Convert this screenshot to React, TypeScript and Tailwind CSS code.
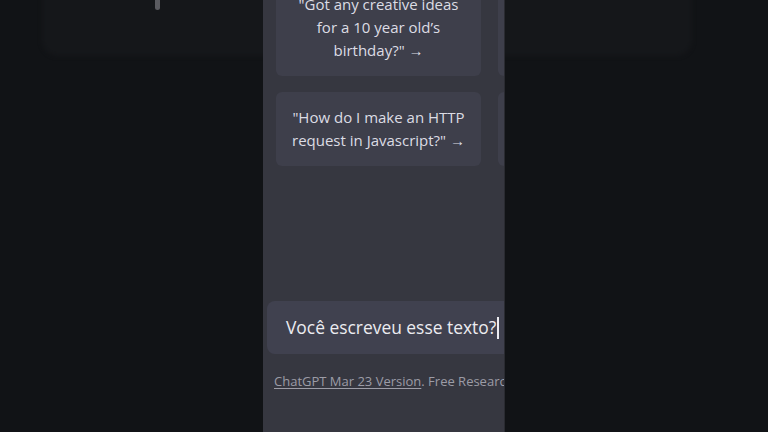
import React from 'react';

const font = { fontFamily: '"Open Sans", "Noto Sans", sans-serif' };

// Suggestion card in the ChatGPT empty state
function ExampleCard({ text, arrow = true }: { text: string; arrow?: boolean }) {
  return (
    <button
      type="button"
      className="w-[205px] shrink-0 rounded-md bg-[#3e3f4b] px-3 py-[14px] text-center text-[15px] font-medium leading-[23px] text-[#dcdce4]"
    >
      {text}
      {arrow && ' →'}
    </button>
  );
}

export default function App() {
  return (
    <div className="relative flex h-[432px] w-[768px] justify-center overflow-hidden bg-[#111316]" style={font}>
      {/* blurred background behind the phone strip */}
      <div className="absolute left-[42px] top-[-30px] h-[86px] w-[650px] rounded-2xl bg-[#15171a] blur-[2px]" />
      <div className="absolute left-[155px] top-0 h-[10px] w-[5px] rounded-b bg-[#5a5b60] blur-[0.5px]" />

      <div className="relative flex w-[242px] flex-col overflow-hidden bg-[#363740]">
        {/* example cards, scrolled so the first ones are cut */}
        <div className="ml-[13px] mt-[-21px] flex gap-[17px]">
          <div className="flex flex-col gap-4">
            <ExampleCard text={'"Got any creative ideas for a 10 year old\u2019s birthday?"'} />
            <ExampleCard text={'"How do I make an HTTP request in Javascript?"'} />
          </div>
          <div className="flex flex-col gap-4">
            <ExampleCard text="Remembers what user said earlier in the conversation" arrow={false} />
            <ExampleCard text="Allows user to provide follow-up corrections" arrow={false} />
          </div>
        </div>

        {/* input */}
        <div className="ml-[4px] mt-auto flex h-[53px] w-[260px] shrink-0 items-center rounded-l-lg bg-[#40414f] pl-[19px]">
          <span className="whitespace-nowrap text-[17.4px] font-medium text-[#ececf1]">Você escreveu esse texto?</span>
          <span className="ml-[1px] inline-block h-[22px] w-[1.5px] bg-[#ececf1]" />
        </div>

        <div className="mb-[42px] ml-[11px] mt-[18px] whitespace-nowrap text-[13px] leading-[18px] text-[#9c9ca6]">
          <span className="underline underline-offset-2">ChatGPT Mar 23 Version</span>. Free Research Preview.
        </div>

        <div className="absolute right-0 top-0 h-full w-px bg-[#2a2b31]" />
      </div>
    </div>
  );
}
